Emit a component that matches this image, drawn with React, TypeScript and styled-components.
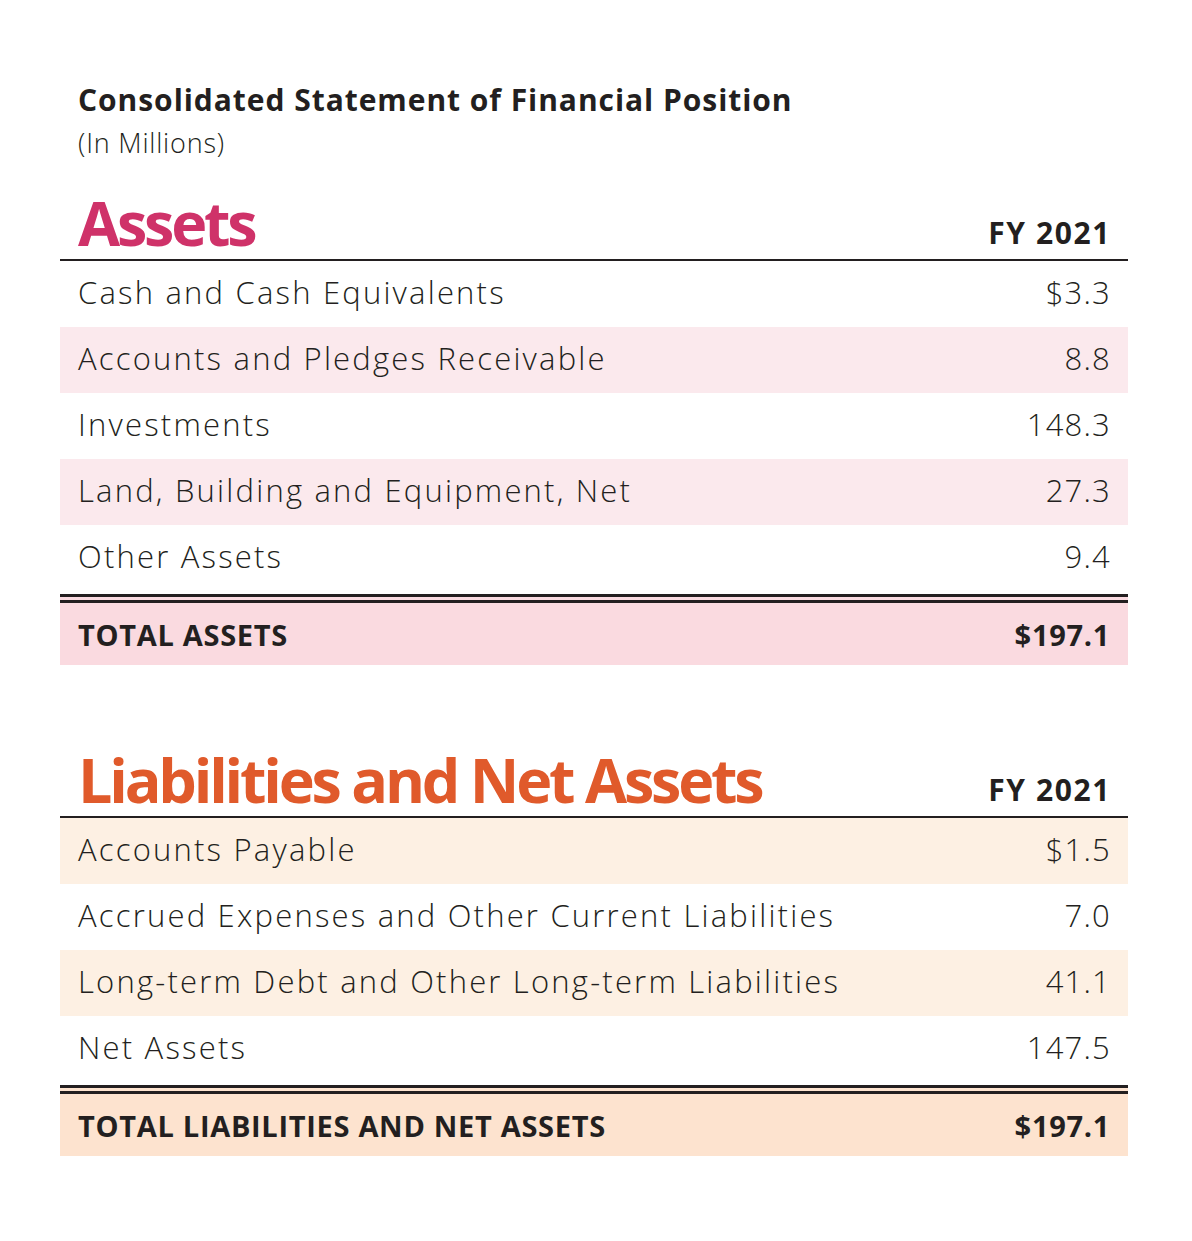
import React from "react";
import styled, { createGlobalStyle } from "styled-components";

const Global = createGlobalStyle`
  html, body { margin: 0; padding: 0; background: #ffffff; }
  body { font-family: "Open Sans", "Liberation Sans", sans-serif; color: #231f20; }
`;

const Page = styled.div`
  width: 1068px;
  padding: 80px 64px 80px 60px;
  display: flex;
  flex-direction: column;
`;

const TitleBlock = styled.div`
  padding-left: 18px;
  display: flex;
  flex-direction: column;
  gap: 5px;
  margin-bottom: 28px;
`;

const Title = styled.h1`
  margin: 0;
  font-size: 30px;
  font-weight: 700;
  line-height: 40px;
  letter-spacing: 0.95px;
`;

const Subtitle = styled.div`
  font-size: 27px;
  font-weight: 300;
  line-height: 36px;
  letter-spacing: 0.8px;
`;

const Section = styled.section<{ $gap?: number }>`
  display: flex;
  flex-direction: column;
  margin-top: ${(p) => p.$gap ?? 0}px;
`;

const Header = styled.div`
  display: flex;
  justify-content: space-between;
  align-items: flex-end;
  padding: 0 17px 0 18px;
  border-bottom: 2px solid #231f20;
  height: 70px;
`;

const Heading = styled.h2<{ $color: string }>`
  margin: 0;
  font-size: 61px;
  font-weight: 700;
  line-height: 70px;
  letter-spacing: -3.2px;
  padding-bottom: 1px;
  color: ${(p) => p.$color};
`;

const Year = styled.div`
  font-size: 30px;
  font-weight: 700;
  line-height: 40px;
  padding-bottom: 6px;
  letter-spacing: 1.6px;
`;

const Row = styled.div<{ $bg: string }>`
  display: flex;
  justify-content: space-between;
  align-items: center;
  height: 66px;
  padding: 0 18px 4px 18px;
  background: ${(p) => p.$bg};
  font-size: 31px;
  font-weight: 300;
  letter-spacing: 2.2px;
  box-sizing: border-box;
`;

const Value = styled.span`
  letter-spacing: 1.2px;
  margin-right: -1px;
`;

const Total = styled.div<{ $bg: string }>`
  display: flex;
  justify-content: space-between;
  align-items: center;
  height: 71px;
  margin-top: 3px;
  border-top: 9px double #231f20;
  padding: 0 18px 0 18px;
  background: ${(p) => p.$bg};
  font-size: 29px;
  font-weight: 700;
  letter-spacing: 0.7px;
  box-sizing: border-box;
`;

type Item = [string, string];

const assets: Item[] = [
  ["Cash and Cash Equivalents", "$3.3"],
  ["Accounts and Pledges Receivable", "8.8"],
  ["Investments", "148.3"],
  ["Land, Building and Equipment, Net", "27.3"],
  ["Other Assets", "9.4"],
];

const liabilities: Item[] = [
  ["Accounts Payable", "$1.5"],
  ["Accrued Expenses and Other Current Liabilities", "7.0"],
  ["Long-term Debt and Other Long-term Liabilities", "41.1"],
  ["Net Assets", "147.5"],
];

function Statement(props: {
  title: string;
  color: string;
  items: Item[];
  stripe: string;
  stripeFirst: boolean;
  totalLabel: string;
  totalValue: string;
  totalBg: string;
  gap?: number;
}) {
  return (
    <Section $gap={props.gap}>
      <Header>
        <Heading $color={props.color}>{props.title}</Heading>
        <Year>FY 2021</Year>
      </Header>
      {props.items.map(([label, value], i) => {
        const striped = props.stripeFirst ? i % 2 === 0 : i % 2 === 1;
        return (
          <Row key={label} $bg={striped ? props.stripe : "transparent"}>
            <span>{label}</span>
            <Value>{value}</Value>
          </Row>
        );
      })}
      <Total $bg={props.totalBg}>
        <span>{props.totalLabel}</span>
        <span>{props.totalValue}</span>
      </Total>
    </Section>
  );
}

export default function App() {
  return (
    <>
      <Global />
      <Page>
        <TitleBlock>
          <Title>Consolidated Statement of Financial Position</Title>
          <Subtitle>(In Millions)</Subtitle>
        </TitleBlock>
        <Statement
          title="Assets"
          color="#cf3269"
          items={assets}
          stripe="#fbe9ed"
          stripeFirst={false}
          totalLabel="TOTAL ASSETS"
          totalValue="$197.1"
          totalBg="#fadae0"
        />
        <Statement
          gap={81}
          title="Liabilities and Net Assets"
          color="#e05a2b"
          items={liabilities}
          stripe="#fdf0e3"
          stripeFirst={true}
          totalLabel="TOTAL LIABILITIES AND NET ASSETS"
          totalValue="$197.1"
          totalBg="#fde3cf"
        />
      </Page>
    </>
  );
}
